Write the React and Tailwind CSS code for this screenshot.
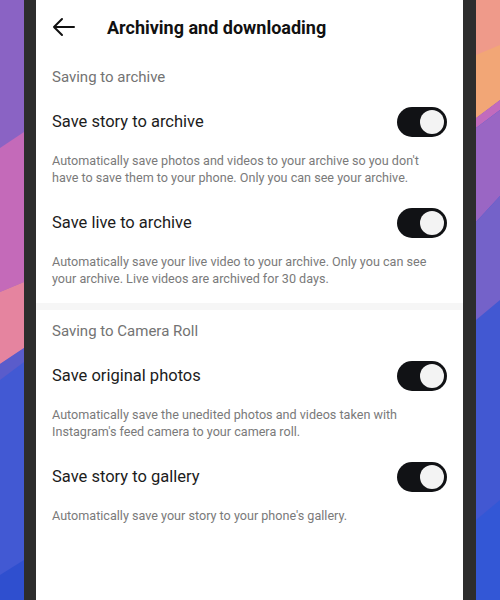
import React from 'react';

const sections = [
  {
    title: 'Saving to archive',
    items: [
      {
        label: 'Save story to archive',
        desc: "Automatically save photos and videos to your archive so you don't have to save them to your phone. Only you can see your archive.",
      },
      {
        label: 'Save live to archive',
        desc: 'Automatically save your live video to your archive. Only you can see your archive. Live videos are archived for 30 days.',
      },
    ],
  },
  {
    title: 'Saving to Camera Roll',
    items: [
      {
        label: 'Save original photos',
        desc: "Automatically save the unedited photos and videos taken with Instagram's feed camera to your camera roll.",
      },
      {
        label: 'Save story to gallery',
        desc: "Automatically save your story to your phone's gallery.",
      },
    ],
  },
];

function LeftWall() {
  return (
    <svg width="24" height="600" viewBox="0 0 24 600" preserveAspectRatio="none" className="block shrink-0">
      <rect width="24" height="600" fill="#8a63c4" />
      <polygon points="0,148 24,132 24,282 0,292" fill="#c46ab9" />
      <polygon points="0,292 24,282 24,348 0,364" fill="#e5849f" />
      <polygon points="0,364 24,348 24,600 0,600" fill="#5a5ccb" />
      <polygon points="0,380 24,362 24,600 0,600" fill="#4259d3" />
      <polygon points="0,575 24,560 24,600 0,600" fill="#2f4fcf" />
    </svg>
  );
}

function RightWall() {
  return (
    <svg width="24" height="600" viewBox="0 0 24 600" preserveAspectRatio="none" className="block shrink-0">
      <rect width="24" height="600" fill="#4258d2" />
      <polygon points="0,0 24,0 24,100 0,118" fill="#ef9a8a" />
      <polygon points="0,55 24,45 24,100 0,118" fill="#f2a676" />
      <polygon points="0,118 24,100 24,110 0,128" fill="#c26bbd" />
      <polygon points="0,128 24,110 24,196 0,222" fill="#9a66c4" />
      <polygon points="0,222 24,196 24,300 0,320" fill="#7462c9" />
      <polygon points="0,520 24,500 24,600 0,600" fill="#3357d6" />
    </svg>
  );
}

function Toggle() {
  return (
    <div className="w-[50px] h-[30px] rounded-full bg-[#111215] flex items-center justify-end pr-[3px] shrink-0">
      <div className="w-[24px] h-[24px] rounded-full bg-[#f3f3f3]" />
    </div>
  );
}

function Row({ label, desc }) {
  return (
    <div className="pt-[4px]">
      <div className="flex items-center justify-between h-[30px]">
        <span className="text-[16.5px] text-[#1c1c1c]">{label}</span>
        <Toggle />
      </div>
      <p className="mt-[15px] text-[12.6px] leading-[17px] text-[#7a7a7a] pr-[12px]">{desc}</p>
    </div>
  );
}

export default function App() {
  return (
    <div className="flex w-[500px] h-[600px] overflow-hidden" style={{ fontFamily: 'Roboto, "Liberation Sans", sans-serif' }}>
      <LeftWall />
      <div className="w-[12px] bg-[#2d2d2d] shrink-0" />
      <div className="flex-1 bg-white">
        <div className="flex items-center h-[54px] px-[16px]">
          <svg width="24" height="24" viewBox="0 0 24 24" fill="none" stroke="#111" strokeWidth="2" strokeLinecap="round" strokeLinejoin="round">
            <path d="M22 12H2M10 4l-8 8 8 8" />
          </svg>
          <h1 className="ml-[31px] text-[18px] font-bold text-[#111]">Archiving and downloading</h1>
        </div>
        {sections.map((s, i) => (
          <div key={s.title}>
            {i > 0 && <div className="h-[7px] bg-[#f6f6f6] mt-[16px]" />}
            <div className={`px-[16px] ${i > 0 ? 'pt-[9px]' : 'pt-[11px]'}`}>
              <div className="text-[15px] text-[#737373] h-[24px] flex items-center">{s.title}</div>
              <div className="flex flex-col gap-[18px] mt-[14px]">
                {s.items.map((it) => (
                  <Row key={it.label} {...it} />
                ))}
              </div>
            </div>
          </div>
        ))}
      </div>
      <div className="w-[13px] bg-[#2d2d2d] shrink-0" />
      <RightWall />
    </div>
  );
}
